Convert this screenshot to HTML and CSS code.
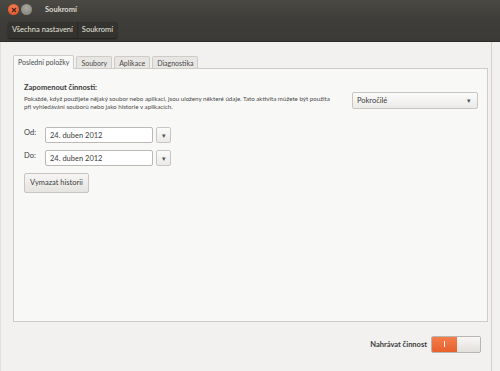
FILE: index.html
```html
<!DOCTYPE html>
<html lang="cs">
<head>
    <meta charset="UTF-8">
    <title>Soukromí</title>
    <link rel="stylesheet" href="styles.css">
</head>
<body>
    <div class="window">
        <!-- Title bar -->
        <div class="titlebar">
            <span class="wbtn close">
                <svg width="6" height="6" viewBox="0 0 6 6"><path d="M1 1L5 5M5 1L1 5" stroke="#4a2418" stroke-width="1.2"/></svg>
            </span>
            <span class="wbtn min"></span>
            <span class="title">Soukromí</span>
        </div>

        <!-- Breadcrumb toolbar -->
        <div class="toolbar">
            <div class="crumbs">
                <span class="crumb">Všechna nastavení</span>
                <span class="crumb">Soukromí</span>
            </div>
        </div>

        <div class="content">
            <div class="main">
                <div class="tabs">
                    <span class="tab active">Poslední položky</span>
                    <span class="tab">Soubory</span>
                    <span class="tab">Aplikace</span>
                    <span class="tab">Diagnostika</span>
                </div>
                <div class="panel">
                    <div class="forget">
                        <div class="forget-text">
                            <h3>Zapomenout činnosti:</h3>
                            <p>Pokaždé, když použijete nějaký soubor nebo aplikaci, jsou uloženy některé údaje. Tato aktivita můžete být použita při vyhledávání souborů nebo jako historie v aplikacích.</p>
                        </div>
                        <div class="combo">
                            <span>Pokročilé</span>
                            <span class="arrow">▾</span>
                        </div>
                    </div>

                    <div class="dates">
                        <div class="daterow">
                            <span class="dlabel">Od:</span>
                            <span class="entry">24. duben 2012</span>
                            <span class="dbtn">▾</span>
                        </div>
                        <div class="daterow">
                            <span class="dlabel">Do:</span>
                            <span class="entry">24. duben 2012</span>
                            <span class="dbtn">▾</span>
                        </div>
                    </div>
                    <span class="button">Vymazat historii</span>
                </div>
            </div>

            <div class="footer">
                <span class="flabel">Nahrávat činnost</span>
                <span class="switch">
                    <span class="on"><span class="bar"></span></span>
                    <span class="off"></span>
                </span>
            </div>
        </div>
    </div>
</body>
</html>
```

FILE: styles.css
```css
body {
    margin: 0;
    padding: 0;
    font-family: Lato, "Open Sans", sans-serif;
    background: #f2f1f0;
    color: #3c3c3c;
}

.window {
    width: 500px;
    height: 371px;
    display: flex;
    flex-direction: column;
    background: #f2f1f0;
}

/* Title bar */
.titlebar {
    height: 19px;
    background: linear-gradient(#4a4944, #3e3d39);
    display: flex;
    align-items: center;
    padding-left: 8px;
}

.wbtn {
    width: 11px;
    height: 11px;
    border-radius: 50%;
    display: flex;
    align-items: center;
    justify-content: center;
}

.wbtn.close {
    background: radial-gradient(circle at 50% 35%, #f48258, #df4b1b);
}

.wbtn.min {
    margin-left: 2px;
    background: radial-gradient(circle at 50% 35%, #a9a8a3, #7d7c77);
}

.title {
    margin-left: 13px;
    font-size: 7.5px;
    font-weight: bold;
    color: #dfdbd2;
}

/* Toolbar */
.toolbar {
    height: 23px;
    background: linear-gradient(#3e3d39, #3b3a36);
    border-bottom: 1px solid #2b2a27;
    display: flex;
    align-items: flex-start;
    padding: 3px 0 0 8px;
    box-sizing: border-box;
}

.crumbs {
    display: flex;
    background: #34332f;
    border-radius: 2px;
    box-shadow: 0 1px 2px rgba(0, 0, 0, 0.5);
}

.crumb {
    font-size: 7.5px;
    color: #e6e3dd;
    padding: 3px 4px 4px;
}

.crumb + .crumb {
    border-left: 1px solid #2a2926;
}

/* Content area */
.content {
    flex: 1;
    display: flex;
    flex-direction: column;
    width: 490px;
    border-right: 1px solid #d3d0cb;
    border-left: 1px solid #e2e0dc;
}

.main {
    padding: 13px 3px 0 12px;
}

.tabs {
    display: flex;
    gap: 2px;
    font-size: 7px;
}

.tab {
    padding: 2px 4px 1px;
    background: #e8e6e3;
    border: 1px solid #cfccc7;
    border-bottom: none;
    border-radius: 2px 2px 0 0;
    color: #4a4a4a;
    margin-top: 1px;
}

.tab.active {
    background: #f8f8f7;
    margin-top: 0;
    padding: 2px 4px 3px;
    margin-bottom: -1px;
    position: relative;
}

.panel {
    height: 254px;
    background: #f8f8f7;
    border: 1px solid #cfccc7;
    box-sizing: border-box;
    padding: 14px 9px 0 10px;
}

.forget {
    display: flex;
    justify-content: space-between;
    align-items: flex-start;
}

.forget-text h3 {
    margin: 0 0 3px;
    font-size: 7.5px;
    font-weight: bold;
    color: #3c3c3c;
}

.forget-text p {
    margin: 0;
    width: 310px;
    font-size: 6.2px;
    line-height: 8px;
    color: #4a4a4a;
}

.combo {
    margin-top: 9px;
    width: 126px;
    height: 17px;
    border: 1px solid #c9c6c1;
    border-radius: 2px;
    background: linear-gradient(#fbfbfa, #ebeae8);
    display: flex;
    align-items: center;
    justify-content: space-between;
    padding: 0 6px 0 4px;
    box-sizing: border-box;
    font-size: 7.5px;
}

.arrow, .dbtn {
    font-size: 7px;
    color: #555;
}

.dates {
    margin-top: 16px;
    display: flex;
    flex-direction: column;
    gap: 7px;
}

.daterow {
    display: flex;
    align-items: flex-start;
}

.dlabel {
    width: 21px;
    font-size: 7.5px;
    margin-top: 1px;
}

.entry {
    width: 108px;
    height: 16px;
    border: 1px solid #bcb9b4;
    border-radius: 2px;
    background: #fff;
    font-size: 7.5px;
    padding: 0 4px;
    box-sizing: border-box;
    display: flex;
    align-items: center;
}

.dbtn {
    margin-left: 3px;
    width: 15px;
    height: 16px;
    border: 1px solid #c9c6c1;
    border-radius: 2px;
    background: linear-gradient(#fbfbfa, #ebeae8);
    box-sizing: border-box;
    display: flex;
    align-items: center;
    justify-content: center;
}

.button {
    display: inline-block;
    margin-top: 7px;
    padding: 4px 5px 5px;
    font-size: 7.5px;
    border: 1px solid #c9c6c1;
    border-radius: 2px;
    background: linear-gradient(#f6f5f4, #e6e4e1);
}

/* Footer with switch */
.footer {
    flex: 1;
    display: flex;
    align-items: center;
    justify-content: flex-end;
    padding: 0 10px 5px 0;
}

.flabel {
    font-size: 7.5px;
    font-weight: bold;
    margin-right: 4px;
}

.switch {
    display: flex;
    width: 50px;
    height: 17px;
    border: 1px solid #b9b6b1;
    border-radius: 2px;
    overflow: hidden;
    box-sizing: border-box;
}

.switch .on {
    width: 25px;
    background: linear-gradient(#f47d4c, #e8602c);
    display: flex;
    align-items: center;
    justify-content: center;
}

.switch .bar {
    width: 1px;
    height: 6px;
    background: #fff;
}

.switch .off {
    flex: 1;
    background: linear-gradient(#f7f7f6, #e2e0dd);
}
```
